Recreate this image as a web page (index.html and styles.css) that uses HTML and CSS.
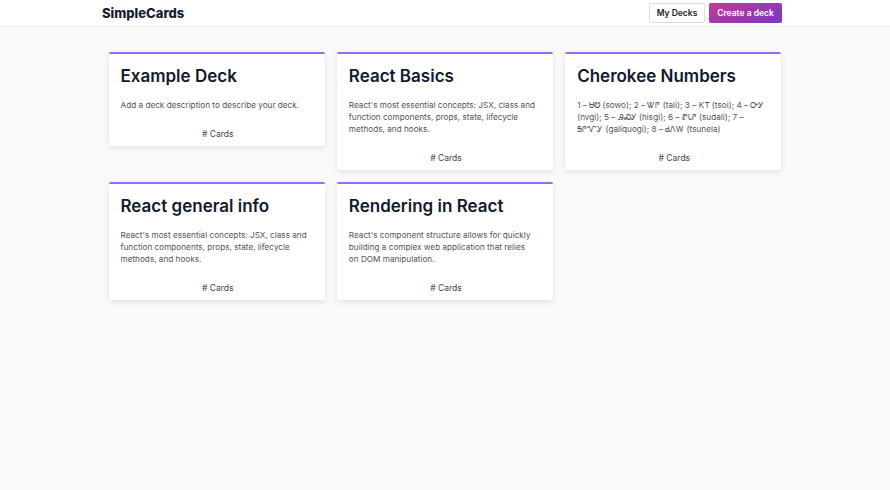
FILE: index.html
```html
<!DOCTYPE html>
<html lang="en">
<head>
<meta charset="utf-8">
<title>SimpleCards</title>
<link rel="stylesheet" href="styles.css">
</head>
<body>
<header class="topbar">
  <div class="logo">SimpleCards</div>
  <nav class="actions">
    <button class="btn btn-light">My Decks</button>
    <button class="btn btn-grad">Create a deck</button>
  </nav>
</header>
<main class="decks">
  <article class="card">
    <h2 class="card-title">Example Deck</h2>
    <p class="card-desc">Add a deck description to describe your deck.</p>
    <div class="card-count"># Cards</div>
  </article>
  <article class="card">
    <h2 class="card-title">React Basics</h2>
    <p class="card-desc">React's most essential concepts: JSX, class and function components, props, state, lifecycle methods, and hooks.</p>
    <div class="card-count"># Cards</div>
  </article>
  <article class="card">
    <h2 class="card-title">Cherokee Numbers</h2>
    <p class="card-desc">1 – ᏌᏬ (sowo); 2 – ᏔᎵ (tali); 3 – ᏦᎢ (tsoi); 4 – ᏅᎩ (nvgi); 5 – ᎯᏍᎩ (hisgi); 6 – ᏑᏓᎵ (sudali); 7 – ᎦᎵᏉᎩ (galiquogi); 8 – ᏧᏁᎳ (tsunela)</p>
    <div class="card-count"># Cards</div>
  </article>
  <article class="card">
    <h2 class="card-title">React general info</h2>
    <p class="card-desc">React's most essential concepts: JSX, class and function components, props, state, lifecycle methods, and hooks.</p>
    <div class="card-count"># Cards</div>
  </article>
  <article class="card">
    <h2 class="card-title">Rendering in React</h2>
    <p class="card-desc">React's component structure allows for quickly building a complex web application that relies on&nbsp;DOM manipulation.</p>
    <div class="card-count"># Cards</div>
  </article>
</main>
</body>
</html>
```
FILE: styles.css
```css
* { box-sizing: border-box; }
html, body { height: 100%; }
body {
  margin: 0;
  background: #fafafa;
  font-family: Inter, "Noto Sans", "DejaVu Sans", sans-serif;
  color: #111827;
}
.topbar {
  height: 27px;
  background: #fff;
  border-bottom: 1px solid #efefef;
  display: flex;
  align-items: center;
  justify-content: space-between;
  padding: 0 108px 0 102px;
}
.logo {
  font-size: 13px;
  font-weight: 800;
  color: #161d33;
}
.actions { display: flex; gap: 4px; }
.btn {
  height: 20px;
  border-radius: 2px;
  font-family: inherit;
  font-size: 8.5px;
  font-weight: 600;
  padding: 0;
  white-space: nowrap;
  cursor: pointer;
}
.btn-light {
  background: #fff;
  border: 1px solid #dcdcdc;
  color: #222;
  width: 56px;
}
.btn-grad {
  border: 0;
  color: #fff;
  width: 73px;
  background: linear-gradient(160deg, #c13c90 0%, #9a38b0 55%, #7b37c2 100%);
}
.decks {
  width: 673px;
  margin: 25px auto 0;
  display: grid;
  grid-template-columns: repeat(3, 1fr);
  column-gap: 12px;
  row-gap: 12px;
  align-items: start;
}
.card {
  background: #fff;
  border-top: 2px solid #9b6cf0;
  border-radius: 2px;
  box-shadow: 0 2px 6px rgba(0, 0, 0, 0.10);
  padding: 11px 10px 6px 12px;
}
.card-title {
  margin: 0;
  font-size: 17px;
  line-height: 22px;
  font-weight: 600;
  color: #111a2e;
}
.card-desc {
  margin: 12px 0 0;
  font-size: 8.2px;
  line-height: 12px;
  color: #555;
}
.card-count {
  margin-top: 17px;
  text-align: center;
  font-size: 8.5px;
  line-height: 12px;
  color: #444;
}
```
